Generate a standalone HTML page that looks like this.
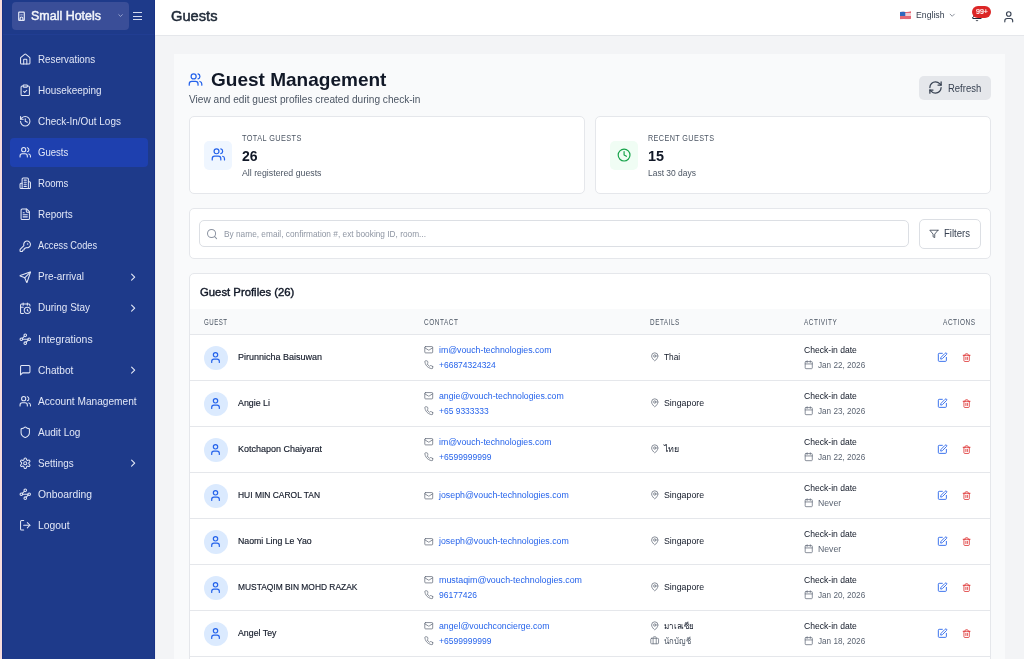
<!DOCTYPE html>
<html><head><meta charset="utf-8">
<style>
*{box-sizing:border-box;margin:0;padding:0}
html,body{width:1024px;height:659px;overflow:hidden}
body{-webkit-font-smoothing:antialiased;font-family:"Liberation Sans",sans-serif;background:#f3f4f6;position:relative;color:#111827}
.abs{position:absolute}
.t{white-space:nowrap}
svg{fill:none;stroke:currentColor;stroke-linecap:round;stroke-linejoin:round;overflow:visible}
</style></head>
<body><div id="root" style="position:absolute;left:0;top:0;width:1024px;height:659px;will-change:transform">
<div class="abs" style="left:0px;top:0px;width:2px;height:659px;background:#f8dddd;"></div>
<div class="abs" style="left:2px;top:0px;width:153px;height:659px;background:#1e3a8a;"></div>
<div class="abs" style="left:2px;top:0px;width:1px;height:659px;background:#183286;"></div>
<div class="abs" style="left:154px;top:0px;width:1px;height:659px;background:#183286;"></div>
<div class="abs" style="left:3px;top:34px;width:151px;height:1px;background:#213d92;"></div>
<div class="abs" style="left:12px;top:2px;width:117px;height:28px;background:#3a4e98;border-radius:4px"></div>
<svg class="abs" style="left:0;top:0;width:40px;height:30px;color:#e3e8f6" viewBox="0 0 40 30" stroke-width="1.15"><rect x="18.7" y="12.1" width="5.6" height="8.3" rx="0.6"/><path d="M20.1 20.3v-1.9a1.4 1.4 0 0 1 2.8 0v1.9"/><path d="M20.2 14.9h.01M21.5 14.9h.01M22.8 14.9h.01" stroke-width="0.9"/></svg>
<div class="abs t" style="left:31.3px;top:10px;font-size:12.3px;line-height:13.739px;color:#f3f5fb;font-weight:400;transform:scaleX(1.0140);transform-origin:0 0;-webkit-text-stroke:0.45px #f3f5fb">Small Hotels</div>
<svg class="abs" style="left:117.15px;top:12.26px;width:7.10px;height:7.10px;color:#c3cbe6" viewBox="0 0 24 24" stroke-width="2.2"><path d="m6 9 6 6 6-6"/></svg>
<div class="abs" style="left:133px;top:12.1px;width:9.2px;height:1.3px;background:#d3daf0;"></div>
<div class="abs" style="left:133px;top:15.6px;width:9.2px;height:1.3px;background:#d3daf0;"></div>
<div class="abs" style="left:133px;top:19.1px;width:9.2px;height:1.3px;background:#d3daf0;"></div>
<svg class="abs" style="left:18.8px;top:53.10px;width:12.5px;height:12.5px;color:#e3e8f6" viewBox="0 0 24 24" stroke-width="2"><path d="M15 21v-8a1 1 0 0 0-1-1h-4a1 1 0 0 0-1 1v8"/><path d="M3 10a2 2 0 0 1 .709-1.528l7-5.999a2 2 0 0 1 2.582 0l7 5.999A2 2 0 0 1 21 10v9a2 2 0 0 1-2 2H5a2 2 0 0 1-2-2z"/></svg>
<div class="abs t" style="left:38.4px;top:54px;font-size:10.6px;line-height:11.840px;color:#e2e7f7;font-weight:400;transform:scaleX(0.9235);transform-origin:0 0;">Reservations</div>
<svg class="abs" style="left:18.8px;top:84.17px;width:12.5px;height:12.5px;color:#e3e8f6" viewBox="0 0 24 24" stroke-width="2"><rect width="8" height="4" x="8" y="2" rx="1" ry="1"/><path d="M16 4h2a2 2 0 0 1 2 2v14a2 2 0 0 1-2 2H6a2 2 0 0 1-2-2V6a2 2 0 0 1 2-2h2"/><path d="m9 14 2 2 4-4"/></svg>
<div class="abs t" style="left:38.4px;top:85px;font-size:10.6px;line-height:11.840px;color:#e2e7f7;font-weight:400;transform:scaleX(0.9390);transform-origin:0 0;">Housekeeping</div>
<svg class="abs" style="left:18.8px;top:115.24px;width:12.5px;height:12.5px;color:#e3e8f6" viewBox="0 0 24 24" stroke-width="2"><path d="M3 12a9 9 0 1 0 9-9 9.75 9.75 0 0 0-6.74 2.74L3 8"/><path d="M3 3v5h5"/><path d="M12 7v5l4 2"/></svg>
<div class="abs t" style="left:38.4px;top:116px;font-size:10.6px;line-height:11.840px;color:#e2e7f7;font-weight:400;transform:scaleX(0.9385);transform-origin:0 0;">Check-In/Out Logs</div>
<div class="abs" style="left:10px;top:138px;width:138px;height:29px;background:#1e40af;border-radius:4px"></div>
<svg class="abs" style="left:18.8px;top:146.31px;width:12.5px;height:12.5px;color:#e3e8f6" viewBox="0 0 24 24" stroke-width="2"><path d="M16 21v-2a4 4 0 0 0-4-4H6a4 4 0 0 0-4 4v2"/><circle cx="9" cy="7" r="4"/><path d="M22 21v-2a4 4 0 0 0-3-3.87"/><path d="M16 3.13a4 4 0 0 1 0 7.75"/></svg>
<div class="abs t" style="left:38.4px;top:147px;font-size:10.6px;line-height:11.840px;color:#e2e7f7;font-weight:400;transform:scaleX(0.9028);transform-origin:0 0;">Guests</div>
<svg class="abs" style="left:18.8px;top:177.38px;width:12.5px;height:12.5px;color:#e3e8f6" viewBox="0 0 24 24" stroke-width="2"><path d="M6 22V4a2 2 0 0 1 2-2h8a2 2 0 0 1 2 2v18Z"/><path d="M6 12H4a2 2 0 0 0-2 2v6a2 2 0 0 0 2 2h2"/><path d="M18 9h2a2 2 0 0 1 2 2v9a2 2 0 0 1-2 2h-2"/><path d="M10 6h4"/><path d="M10 10h4"/><path d="M10 14h4"/><path d="M10 18h4"/></svg>
<div class="abs t" style="left:38.4px;top:178px;font-size:10.6px;line-height:11.840px;color:#e2e7f7;font-weight:400;transform:scaleX(0.9028);transform-origin:0 0;">Rooms</div>
<svg class="abs" style="left:18.8px;top:208.45px;width:12.5px;height:12.5px;color:#e3e8f6" viewBox="0 0 24 24" stroke-width="2"><path d="M15 2H6a2 2 0 0 0-2 2v16a2 2 0 0 0 2 2h12a2 2 0 0 0 2-2V7Z"/><path d="M14 2v4a2 2 0 0 0 2 2h4"/><path d="M10 9H8"/><path d="M16 13H8"/><path d="M16 17H8"/></svg>
<div class="abs t" style="left:38.4px;top:209px;font-size:10.6px;line-height:11.840px;color:#e2e7f7;font-weight:400;transform:scaleX(0.9328);transform-origin:0 0;">Reports</div>
<svg class="abs" style="left:18.8px;top:239.52px;width:12.5px;height:12.5px;color:#e3e8f6" viewBox="0 0 24 24" stroke-width="2"><path d="M2.586 17.414A2 2 0 0 0 2 18.828V21a1 1 0 0 0 1 1h3a1 1 0 0 0 1-1v-1a1 1 0 0 1 1-1h1a1 1 0 0 0 1-1v-1a1 1 0 0 1 1-1h.172a2 2 0 0 0 1.414-.586l.814-.814a6.5 6.5 0 1 0-4-4z"/><circle cx="16.5" cy="7.5" r=".5" fill="currentColor"/></svg>
<div class="abs t" style="left:38.4px;top:240px;font-size:10.6px;line-height:11.840px;color:#e2e7f7;font-weight:400;transform:scaleX(0.8727);transform-origin:0 0;">Access Codes</div>
<svg class="abs" style="left:18.8px;top:270.59px;width:12.5px;height:12.5px;color:#e3e8f6" viewBox="0 0 24 24" stroke-width="2"><path d="M14.536 21.686a.5.5 0 0 0 .937-.024l6.5-19a.496.496 0 0 0-.635-.635l-19 6.5a.5.5 0 0 0-.024.937l7.93 3.18a2 2 0 0 1 1.112 1.11z"/><path d="m21.854 2.147-10.94 10.939"/></svg>
<div class="abs t" style="left:38.4px;top:271px;font-size:10.6px;line-height:11.840px;color:#e2e7f7;font-weight:400;transform:scaleX(0.9394);transform-origin:0 0;">Pre-arrival</div>
<svg class="abs" style="left:126.85px;top:270.78px;width:12.29px;height:12.29px;color:#e3e8f6" viewBox="0 0 24 24" stroke-width="2.2"><path d="m9 18 6-6-6-6"/></svg>
<svg class="abs" style="left:18.8px;top:301.66px;width:12.5px;height:12.5px;color:#e3e8f6" viewBox="0 0 24 24" stroke-width="2"><path d="M21 7.5V6a2 2 0 0 0-2-2H5a2 2 0 0 0-2 2v14a2 2 0 0 0 2 2h3.5"/><path d="M16 2v4"/><path d="M8 2v4"/><path d="M3 10h5"/><path d="M17.5 17.5 16 16.3V14"/><circle cx="16" cy="16" r="6"/></svg>
<div class="abs t" style="left:38.4px;top:302px;font-size:10.6px;line-height:11.840px;color:#e2e7f7;font-weight:400;transform:scaleX(0.9411);transform-origin:0 0;">During Stay</div>
<svg class="abs" style="left:126.85px;top:301.85px;width:12.29px;height:12.29px;color:#e3e8f6" viewBox="0 0 24 24" stroke-width="2.2"><path d="m9 18 6-6-6-6"/></svg>
<svg class="abs" style="left:18.8px;top:332.73px;width:12.5px;height:12.5px;color:#e3e8f6" viewBox="0 0 24 24" stroke-width="2"><circle cx="12" cy="4.5" r="2.5"/><path d="m10.2 6.3-3.9 3.9"/><circle cx="4.5" cy="12" r="2.5"/><path d="M7 12h10"/><circle cx="19.5" cy="12" r="2.5"/><path d="m13.8 17.7 3.9-3.9"/><circle cx="12" cy="19.5" r="2.5"/></svg>
<div class="abs t" style="left:38.4px;top:334px;font-size:10.6px;line-height:11.840px;color:#e2e7f7;font-weight:400;transform:scaleX(0.9863);transform-origin:0 0;">Integrations</div>
<svg class="abs" style="left:18.8px;top:363.80px;width:12.5px;height:12.5px;color:#e3e8f6" viewBox="0 0 24 24" stroke-width="2"><path d="M21 15a2 2 0 0 1-2 2H7l-4 4V5a2 2 0 0 1 2-2h14a2 2 0 0 1 2 2z"/></svg>
<div class="abs t" style="left:38.4px;top:365px;font-size:10.6px;line-height:11.840px;color:#e2e7f7;font-weight:400;transform:scaleX(0.9539);transform-origin:0 0;">Chatbot</div>
<svg class="abs" style="left:126.85px;top:363.99px;width:12.29px;height:12.29px;color:#e3e8f6" viewBox="0 0 24 24" stroke-width="2.2"><path d="m9 18 6-6-6-6"/></svg>
<svg class="abs" style="left:18.8px;top:394.87px;width:12.5px;height:12.5px;color:#e3e8f6" viewBox="0 0 24 24" stroke-width="2"><path d="M16 21v-2a4 4 0 0 0-4-4H6a4 4 0 0 0-4 4v2"/><circle cx="9" cy="7" r="4"/><path d="M22 21v-2a4 4 0 0 0-3-3.87"/><path d="M16 3.13a4 4 0 0 1 0 7.75"/></svg>
<div class="abs t" style="left:38.4px;top:396px;font-size:10.6px;line-height:11.840px;color:#e2e7f7;font-weight:400;transform:scaleX(0.9567);transform-origin:0 0;">Account Management</div>
<svg class="abs" style="left:18.8px;top:425.94px;width:12.5px;height:12.5px;color:#e3e8f6" viewBox="0 0 24 24" stroke-width="2"><path d="M20 13c0 5-3.5 7.5-7.66 8.95a1 1 0 0 1-.67-.01C7.5 20.5 4 18 4 13V6a1 1 0 0 1 1-1c2 0 4.5-1.2 6.24-2.72a1.17 1.17 0 0 1 1.52 0C14.51 3.81 17 5 19 5a1 1 0 0 1 1 1z"/></svg>
<div class="abs t" style="left:38.4px;top:427px;font-size:10.6px;line-height:11.840px;color:#e2e7f7;font-weight:400;transform:scaleX(0.9472);transform-origin:0 0;">Audit Log</div>
<svg class="abs" style="left:18.8px;top:457.01px;width:12.5px;height:12.5px;color:#e3e8f6" viewBox="0 0 24 24" stroke-width="2"><path d="M12.22 2h-.44a2 2 0 0 0-2 2v.18a2 2 0 0 1-1 1.73l-.43.25a2 2 0 0 1-2 0l-.15-.08a2 2 0 0 0-2.73.73l-.22.38a2 2 0 0 0 .73 2.73l.15.1a2 2 0 0 1 1 1.72v.51a2 2 0 0 1-1 1.74l-.15.09a2 2 0 0 0-.73 2.73l.22.38a2 2 0 0 0 2.73.73l.15-.08a2 2 0 0 1 2 0l.43.25a2 2 0 0 1 1 1.73V20a2 2 0 0 0 2 2h.44a2 2 0 0 0 2-2v-.18a2 2 0 0 1 1-1.73l.43-.25a2 2 0 0 1 2 0l.15.08a2 2 0 0 0 2.73-.73l.22-.39a2 2 0 0 0-.73-2.73l-.15-.08a2 2 0 0 1-1-1.74v-.5a2 2 0 0 1 1-1.74l.15-.09a2 2 0 0 0 .73-2.73l-.22-.38a2 2 0 0 0-2.73-.73l-.15.08a2 2 0 0 1-2 0l-.43-.25a2 2 0 0 1-1-1.73V4a2 2 0 0 0-2-2z"/><circle cx="12" cy="12" r="3"/></svg>
<div class="abs t" style="left:38.4px;top:458px;font-size:10.6px;line-height:11.840px;color:#e2e7f7;font-weight:400;transform:scaleX(0.9300);transform-origin:0 0;">Settings</div>
<svg class="abs" style="left:126.85px;top:457.20px;width:12.29px;height:12.29px;color:#e3e8f6" viewBox="0 0 24 24" stroke-width="2.2"><path d="m9 18 6-6-6-6"/></svg>
<svg class="abs" style="left:18.8px;top:488.08px;width:12.5px;height:12.5px;color:#e3e8f6" viewBox="0 0 24 24" stroke-width="2"><circle cx="12" cy="4.5" r="2.5"/><path d="m10.2 6.3-3.9 3.9"/><circle cx="4.5" cy="12" r="2.5"/><path d="M7 12h10"/><circle cx="19.5" cy="12" r="2.5"/><path d="m13.8 17.7 3.9-3.9"/><circle cx="12" cy="19.5" r="2.5"/></svg>
<div class="abs t" style="left:38.4px;top:489px;font-size:10.6px;line-height:11.840px;color:#e2e7f7;font-weight:400;transform:scaleX(0.9752);transform-origin:0 0;">Onboarding</div>
<svg class="abs" style="left:18.8px;top:519.15px;width:12.5px;height:12.5px;color:#e3e8f6" viewBox="0 0 24 24" stroke-width="2"><path d="M9 21H5a2 2 0 0 1-2-2V5a2 2 0 0 1 2-2h4"/><path d="m16 17 5-5-5-5"/><path d="M21 12H9"/></svg>
<div class="abs t" style="left:38.4px;top:520px;font-size:10.6px;line-height:11.840px;color:#e2e7f7;font-weight:400;transform:scaleX(0.9751);transform-origin:0 0;">Logout</div>
<div class="abs" style="left:155px;top:0px;width:869px;height:35px;background:#fff;"></div>
<div class="abs" style="left:155px;top:35px;width:869px;height:1px;background:#e5e7eb;"></div>
<div class="abs" style="left:155px;top:36px;width:1px;height:623px;background:#eceef3;"></div>
<div class="abs t" style="left:170.5px;top:8px;font-size:14.5px;line-height:16.197px;color:#1f2937;font-weight:400;transform:scaleX(1.0122);transform-origin:0 0;-webkit-text-stroke:0.5px #1f2937">Guests</div>
<svg class="abs" style="left:899px;top:10px;width:14px;height:11px;overflow:visible" viewBox="899 10 14 11"><defs><linearGradient id="flagst" x1="0" y1="11.3" x2="0" y2="19.5" gradientUnits="userSpaceOnUse"><stop offset="0.0%" stop-color="#e46774"/><stop offset="7.9%" stop-color="#e46774"/><stop offset="7.9%" stop-color="#f5cdd2"/><stop offset="14.3%" stop-color="#f5cdd2"/><stop offset="14.3%" stop-color="#e46774"/><stop offset="22.1%" stop-color="#e46774"/><stop offset="22.1%" stop-color="#f5cdd2"/><stop offset="28.6%" stop-color="#f5cdd2"/><stop offset="28.6%" stop-color="#e46774"/><stop offset="36.4%" stop-color="#e46774"/><stop offset="36.4%" stop-color="#f5cdd2"/><stop offset="42.9%" stop-color="#f5cdd2"/><stop offset="42.9%" stop-color="#e46774"/><stop offset="50.7%" stop-color="#e46774"/><stop offset="50.7%" stop-color="#f5cdd2"/><stop offset="57.1%" stop-color="#f5cdd2"/><stop offset="57.1%" stop-color="#e46774"/><stop offset="65.0%" stop-color="#e46774"/><stop offset="65.0%" stop-color="#f5cdd2"/><stop offset="71.4%" stop-color="#f5cdd2"/><stop offset="71.4%" stop-color="#e46774"/><stop offset="79.3%" stop-color="#e46774"/><stop offset="79.3%" stop-color="#f5cdd2"/><stop offset="85.7%" stop-color="#f5cdd2"/><stop offset="85.7%" stop-color="#e46774"/><stop offset="93.6%" stop-color="#e46774"/><stop offset="93.6%" stop-color="#f5cdd2"/><stop offset="100.0%" stop-color="#f5cdd2"/></linearGradient></defs><path d="M900 12.1 Q903 11.7 905.5 12 Q908.5 12.3 911 11.3 L911 18.7 Q908.5 19.6 905.5 19.2 Q903 18.9 900 19.5 Z" style="fill:url(#flagst);stroke:none"/><path d="M900 12.1 Q903 11.7 905.3 12 L905.3 15.9 L900 16 Z" style="fill:#3068bd;stroke:none"/></svg>
<div class="abs t" style="left:915.9px;top:11px;font-size:8.2px;line-height:9.159px;color:#374151;font-weight:400;transform:scaleX(1.0611);transform-origin:0 0;">English</div>
<svg class="abs" style="left:948.27px;top:10.72px;width:8.45px;height:8.45px;color:#6b7280" viewBox="0 0 24 24" stroke-width="2.2"><path d="m6 9 6 6 6-6"/></svg>
<svg class="abs" style="left:971.2px;top:10.0px;width:12px;height:12px;color:#1f2937" viewBox="0 0 24 24" stroke-width="2"><path d="M10.268 21a2 2 0 0 0 3.464 0"/><path d="M3.262 15.326A1 1 0 0 0 4 17h16a1 1 0 0 0 .74-1.673C19.41 13.956 18 12.499 18 8A6 6 0 0 0 6 8c0 4.499-1.411 5.956-2.738 7.326"/></svg>
<div class="abs" style="left:972px;top:5.8px;width:19.1px;height:12.2px;background:#dc2626;border-radius:6.1px"></div>
<div class="abs t" style="left:975.8px;top:8px;font-size:7.7px;line-height:8.601px;color:#fff;font-weight:400;transform:scaleX(0.9198);transform-origin:0 0;-webkit-text-stroke:0.2px #fff">99+</div>
<svg class="abs" style="left:1001.75px;top:9.88px;width:13.50px;height:13.50px;color:#374151" viewBox="0 0 24 24" stroke-width="2"><path d="M19 21v-2a4 4 0 0 0-4-4H9a4 4 0 0 0-4 4v2"/><circle cx="12" cy="7" r="4"/></svg>
<div class="abs" style="left:174px;top:54px;width:831px;height:620px;background:#f9fafb;"></div>
<svg class="abs" style="left:188.47px;top:71.85px;width:15.05px;height:15.05px;color:#2563eb" viewBox="0 0 24 24" stroke-width="2"><path d="M16 21v-2a4 4 0 0 0-4-4H6a4 4 0 0 0-4 4v2"/><circle cx="9" cy="7" r="4"/><path d="M22 21v-2a4 4 0 0 0-3-3.87"/><path d="M16 3.13a4 4 0 0 1 0 7.75"/></svg>
<div class="abs t" style="left:211px;top:69px;font-size:19px;line-height:21.223px;color:#111827;font-weight:700;transform:scaleX(1.0008);transform-origin:0 0;">Guest Management</div>
<div class="abs t" style="left:189px;top:94px;font-size:10.1px;line-height:11.282px;color:#4b5563;font-weight:400;transform:scaleX(1.0022);transform-origin:0 0;">View and edit guest profiles created during check-in</div>
<div class="abs" style="left:919.3px;top:76px;width:71.5px;height:24px;background:#e5e7eb;border-radius:5px"></div>
<svg class="abs" style="left:928.05px;top:80.45px;width:15.00px;height:15.00px;color:#374151" viewBox="0 0 24 24" stroke-width="2"><path d="M3 12a9 9 0 0 1 9-9 9.75 9.75 0 0 1 6.74 2.74L21 8"/><path d="M21 3v5h-5"/><path d="M21 12a9 9 0 0 1-9 9 9.75 9.75 0 0 1-6.74-2.74L3 16"/><path d="M8 16H3v5"/></svg>
<div class="abs t" style="left:947.8px;top:82px;font-size:10.75px;line-height:12.008px;color:#374151;font-weight:400;transform:scaleX(0.8817);transform-origin:0 0;">Refresh</div>
<div class="abs" style="left:189px;top:116px;width:396px;height:78px;background:#fff;border:1px solid #e5e7eb;border-radius:5px"></div>
<div class="abs" style="left:204px;top:141px;width:28.3px;height:28.8px;background:#eff6ff;border-radius:5px"></div>
<svg class="abs" style="left:210.89px;top:147.27px;width:14.73px;height:14.73px;color:#2563eb" viewBox="0 0 24 24" stroke-width="2"><path d="M16 21v-2a4 4 0 0 0-4-4H6a4 4 0 0 0-4 4v2"/><circle cx="9" cy="7" r="4"/><path d="M22 21v-2a4 4 0 0 0-3-3.87"/><path d="M16 3.13a4 4 0 0 1 0 7.75"/></svg>
<div class="abs t" style="left:242.4px;top:133px;font-size:9.3px;line-height:10.388px;color:#4b5563;font-weight:400;transform:scaleX(0.7899);transform-origin:0 0;letter-spacing:0.5px;">TOTAL GUESTS</div>
<div class="abs t" style="left:242.4px;top:148px;font-size:15px;line-height:16.755px;color:#111827;font-weight:700;transform:scaleX(0.9348);transform-origin:0 0;">26</div>
<div class="abs t" style="left:242.4px;top:168px;font-size:9.15px;line-height:10.221px;color:#4b5563;font-weight:400;transform:scaleX(0.9615);transform-origin:0 0;">All registered guests</div>
<div class="abs" style="left:595px;top:116px;width:396px;height:78px;background:#fff;border:1px solid #e5e7eb;border-radius:5px"></div>
<div class="abs" style="left:610px;top:141px;width:28.3px;height:28.8px;background:#f0fdf4;border-radius:5px"></div>
<svg class="abs" style="left:616.91px;top:147.91px;width:14.18px;height:14.18px;color:#16a34a" viewBox="0 0 24 24" stroke-width="2"><circle cx="12" cy="12" r="10"/><path d="M12 6v6l4 2"/></svg>
<div class="abs t" style="left:648.2px;top:133px;font-size:9.3px;line-height:10.388px;color:#4b5563;font-weight:400;transform:scaleX(0.7777);transform-origin:0 0;letter-spacing:0.5px;">RECENT GUESTS</div>
<div class="abs t" style="left:648.2px;top:148px;font-size:15px;line-height:16.755px;color:#111827;font-weight:700;transform:scaleX(0.9588);transform-origin:0 0;">15</div>
<div class="abs t" style="left:648.2px;top:168px;font-size:9.15px;line-height:10.221px;color:#4b5563;font-weight:400;transform:scaleX(0.9275);transform-origin:0 0;">Last 30 days</div>
<div class="abs" style="left:189px;top:208px;width:802px;height:51px;background:#fff;border:1px solid #e5e7eb;border-radius:5px"></div>
<div class="abs" style="left:199px;top:220px;width:710px;height:27px;background:#fff;border:1px solid #dcdfe4;border-radius:5px"></div>
<svg class="abs" style="left:205.99px;top:227.69px;width:12.12px;height:12.12px;color:#8b93a1" viewBox="0 0 24 24" stroke-width="2"><circle cx="11" cy="11" r="8"/><path d="m21 21-4.3-4.3"/></svg>
<div class="abs t" style="left:224px;top:230px;font-size:8.4px;line-height:9.383px;color:#8f96a3;font-weight:400;transform:scaleX(0.9907);transform-origin:0 0;">By name, email, confirmation #, ext booking ID, room...</div>
<div class="abs" style="left:919.3px;top:219.1px;width:61.3px;height:29.6px;background:#fff;border:1px solid #dcdfe4;border-radius:5px"></div>
<svg class="abs" style="left:928.59px;top:228.68px;width:9.82px;height:9.82px;color:#374151" viewBox="0 0 24 24" stroke-width="2"><path d="M22 3H2l8 9.46V19l4 2v-8.54L22 3z"/></svg>
<div class="abs t" style="left:943.9px;top:227px;font-size:10.9px;line-height:12.175px;color:#374151;font-weight:400;transform:scaleX(0.8801);transform-origin:0 0;">Filters</div>
<div class="abs" style="left:189px;top:273px;width:802px;height:420px;background:#fff;border:1px solid #e5e7eb;border-radius:5px"></div>
<div class="abs t" style="left:199.6px;top:286px;font-size:11.5px;line-height:12.845px;color:#111827;font-weight:400;transform:scaleX(0.9846);transform-origin:0 0;-webkit-text-stroke:0.4px #111827">Guest Profiles (26)</div>
<div class="abs" style="left:190px;top:309px;width:800px;height:25px;background:#f9fafb;"></div>
<div class="abs" style="left:190px;top:334px;width:800px;height:1px;background:#e5e7eb;"></div>
<div class="abs t" style="left:203.9px;top:318px;font-size:8.4px;line-height:9.383px;color:#4b5563;font-weight:400;transform:scaleX(0.7293);transform-origin:0 0;letter-spacing:0.7px;">GUEST</div>
<div class="abs t" style="left:424px;top:318px;font-size:8.4px;line-height:9.383px;color:#4b5563;font-weight:400;transform:scaleX(0.7684);transform-origin:0 0;letter-spacing:0.7px;">CONTACT</div>
<div class="abs t" style="left:650.2px;top:318px;font-size:8.4px;line-height:9.383px;color:#4b5563;font-weight:400;transform:scaleX(0.7604);transform-origin:0 0;letter-spacing:0.7px;">DETAILS</div>
<div class="abs t" style="left:804px;top:318px;font-size:8.4px;line-height:9.383px;color:#4b5563;font-weight:400;transform:scaleX(0.7668);transform-origin:0 0;letter-spacing:0.7px;">ACTIVITY</div>
<div class="abs t" style="left:943.1px;top:318px;font-size:8.4px;line-height:9.383px;color:#4b5563;font-weight:400;transform:scaleX(0.7760);transform-origin:0 0;letter-spacing:0.7px;">ACTIONS</div>
<div class="abs" style="left:190px;top:380px;width:800px;height:1px;background:#e5e7eb;"></div>
<div class="abs" style="left:204px;top:345.5px;width:24px;height:24px;background:#dbeafe;border-radius:50%"></div>
<svg class="abs" style="left:209.28px;top:351.27px;width:13.04px;height:13.04px;color:#2563eb" viewBox="0 0 24 24" stroke-width="2.2"><path d="M19 21v-2a4 4 0 0 0-4-4H9a4 4 0 0 0-4 4v2"/><circle cx="12" cy="7" r="4"/></svg>
<div class="abs t" style="left:237.7px;top:352px;font-size:9.2px;line-height:10.276px;color:#111827;font-weight:400;transform:scaleX(0.9789);transform-origin:0 0;-webkit-text-stroke:0.15px #111827">Pirunnicha Baisuwan</div>
<svg class="abs" style="left:423.70px;top:345.41px;width:9.49px;height:9.49px;color:#6b7280" viewBox="0 0 24 24" stroke-width="2"><rect width="20" height="16" x="2" y="4" rx="2"/><path d="m22 7-8.97 5.7a1.94 1.94 0 0 1-2.06 0L2 7"/></svg>
<div class="abs t" style="left:438.7px;top:346px;font-size:8.9px;line-height:9.941px;color:#2563eb;font-weight:400;transform:scaleX(0.9860);transform-origin:0 0;">im@vouch-technologies.com</div>
<svg class="abs" style="left:423.70px;top:359.60px;width:9.49px;height:9.49px;color:#6b7280" viewBox="0 0 24 24" stroke-width="2"><path d="M22 16.92v3a2 2 0 0 1-2.18 2 19.79 19.79 0 0 1-8.63-3.07 19.5 19.5 0 0 1-6-6 19.79 19.79 0 0 1-3.07-8.67A2 2 0 0 1 4.11 2h3a2 2 0 0 1 2 1.72 12.84 12.84 0 0 0 .7 2.81 2 2 0 0 1-.45 2.11L8.09 9.910a16 16 0 0 0 6 6l1.27-1.27a2 2 0 0 1 2.11-.45 12.84 12.84 0 0 0 2.81.7A2 2 0 0 1 22 16.92z"/></svg>
<div class="abs t" style="left:438.7px;top:361px;font-size:8.9px;line-height:9.941px;color:#2563eb;font-weight:400;transform:scaleX(0.9549);transform-origin:0 0;">+66874324324</div>
<svg class="abs" style="left:649.70px;top:352.30px;width:9.60px;height:9.60px;color:#6b7280" viewBox="0 0 24 24" stroke-width="2"><path d="M20 10c0 4.993-5.539 10.193-7.399 11.799a1 1 0 0 1-1.202 0C9.539 20.193 4 14.993 4 10a8 8 0 0 1 16 0"/><circle cx="12" cy="10" r="3"/></svg>
<div class="abs t" style="left:664.1px;top:353px;font-size:8.9px;line-height:9.941px;color:#111827;font-weight:400;transform:scaleX(0.9383);transform-origin:0 0;">Thai</div>
<div class="abs t" style="left:804.2px;top:346px;font-size:8.9px;line-height:9.941px;color:#111827;font-weight:400;transform:scaleX(0.9659);transform-origin:0 0;">Check-in date</div>
<svg class="abs" style="left:804.11px;top:360.00px;width:9.48px;height:9.48px;color:#6b7280" viewBox="0 0 24 24" stroke-width="2"><path d="M8 2v4"/><path d="M16 2v4"/><rect width="18" height="18" x="3" y="4" rx="2"/><path d="M3 10h18"/></svg>
<div class="abs t" style="left:818.1px;top:361px;font-size:8.9px;line-height:9.941px;color:#5b6472;font-weight:400;transform:scaleX(0.9196);transform-origin:0 0;">Jan 22, 2026</div>
<svg class="abs" style="left:937.41px;top:352.49px;width:10.71px;height:10.71px;color:#2563eb" viewBox="0 0 24 24" stroke-width="2"><path d="M12 3H5a2 2 0 0 0-2 2v14a2 2 0 0 0 2 2h14a2 2 0 0 0 2-2v-7"/><path d="M18.375 2.625a1 1 0 0 1 3 3l-9.013 9.014a2 2 0 0 1-.853.505l-2.873.84a.5.5 0 0 1-.62-.62l.84-2.873a2 2 0 0 1 .506-.852z"/></svg>
<svg class="abs" style="left:961.93px;top:352.92px;width:9.24px;height:9.24px;color:#dc2626" viewBox="0 0 24 24" stroke-width="2"><path d="M3 6h18"/><path d="M19 6v14c0 1-1 2-2 2H7c-1 0-2-1-2-2V6"/><path d="M8 6V4c0-1 1-2 2-2h4c1 0 2 1 2 2v2"/><path d="M10 11v6"/><path d="M14 11v6"/></svg>
<div class="abs" style="left:190px;top:426px;width:800px;height:1px;background:#e5e7eb;"></div>
<div class="abs" style="left:204px;top:391.5px;width:24px;height:24px;background:#dbeafe;border-radius:50%"></div>
<svg class="abs" style="left:209.28px;top:397.27px;width:13.04px;height:13.04px;color:#2563eb" viewBox="0 0 24 24" stroke-width="2.2"><path d="M19 21v-2a4 4 0 0 0-4-4H9a4 4 0 0 0-4 4v2"/><circle cx="12" cy="7" r="4"/></svg>
<div class="abs t" style="left:237.7px;top:398px;font-size:9.2px;line-height:10.276px;color:#111827;font-weight:400;transform:scaleX(0.9638);transform-origin:0 0;-webkit-text-stroke:0.15px #111827">Angie Li</div>
<svg class="abs" style="left:423.70px;top:391.41px;width:9.49px;height:9.49px;color:#6b7280" viewBox="0 0 24 24" stroke-width="2"><rect width="20" height="16" x="2" y="4" rx="2"/><path d="m22 7-8.97 5.7a1.94 1.94 0 0 1-2.06 0L2 7"/></svg>
<div class="abs t" style="left:438.7px;top:392px;font-size:8.9px;line-height:9.941px;color:#2563eb;font-weight:400;transform:scaleX(0.9870);transform-origin:0 0;">angie@vouch-technologies.com</div>
<svg class="abs" style="left:423.70px;top:405.60px;width:9.49px;height:9.49px;color:#6b7280" viewBox="0 0 24 24" stroke-width="2"><path d="M22 16.92v3a2 2 0 0 1-2.18 2 19.79 19.79 0 0 1-8.63-3.07 19.5 19.5 0 0 1-6-6 19.79 19.79 0 0 1-3.07-8.67A2 2 0 0 1 4.11 2h3a2 2 0 0 1 2 1.72 12.84 12.84 0 0 0 .7 2.81 2 2 0 0 1-.45 2.11L8.09 9.910a16 16 0 0 0 6 6l1.27-1.27a2 2 0 0 1 2.11-.45 12.84 12.84 0 0 0 2.81.7A2 2 0 0 1 22 16.92z"/></svg>
<div class="abs t" style="left:438.7px;top:407px;font-size:8.9px;line-height:9.941px;color:#2563eb;font-weight:400;transform:scaleX(0.9524);transform-origin:0 0;">+65 9333333</div>
<svg class="abs" style="left:649.70px;top:398.30px;width:9.60px;height:9.60px;color:#6b7280" viewBox="0 0 24 24" stroke-width="2"><path d="M20 10c0 4.993-5.539 10.193-7.399 11.799a1 1 0 0 1-1.202 0C9.539 20.193 4 14.993 4 10a8 8 0 0 1 16 0"/><circle cx="12" cy="10" r="3"/></svg>
<div class="abs t" style="left:664.1px;top:399px;font-size:8.9px;line-height:9.941px;color:#111827;font-weight:400;transform:scaleX(0.9909);transform-origin:0 0;">Singapore</div>
<div class="abs t" style="left:804.2px;top:392px;font-size:8.9px;line-height:9.941px;color:#111827;font-weight:400;transform:scaleX(0.9659);transform-origin:0 0;">Check-in date</div>
<svg class="abs" style="left:804.11px;top:406.00px;width:9.48px;height:9.48px;color:#6b7280" viewBox="0 0 24 24" stroke-width="2"><path d="M8 2v4"/><path d="M16 2v4"/><rect width="18" height="18" x="3" y="4" rx="2"/><path d="M3 10h18"/></svg>
<div class="abs t" style="left:818.1px;top:407px;font-size:8.9px;line-height:9.941px;color:#5b6472;font-weight:400;transform:scaleX(0.9196);transform-origin:0 0;">Jan 23, 2026</div>
<svg class="abs" style="left:937.41px;top:398.49px;width:10.71px;height:10.71px;color:#2563eb" viewBox="0 0 24 24" stroke-width="2"><path d="M12 3H5a2 2 0 0 0-2 2v14a2 2 0 0 0 2 2h14a2 2 0 0 0 2-2v-7"/><path d="M18.375 2.625a1 1 0 0 1 3 3l-9.013 9.014a2 2 0 0 1-.853.505l-2.873.84a.5.5 0 0 1-.62-.62l.84-2.873a2 2 0 0 1 .506-.852z"/></svg>
<svg class="abs" style="left:961.93px;top:398.92px;width:9.24px;height:9.24px;color:#dc2626" viewBox="0 0 24 24" stroke-width="2"><path d="M3 6h18"/><path d="M19 6v14c0 1-1 2-2 2H7c-1 0-2-1-2-2V6"/><path d="M8 6V4c0-1 1-2 2-2h4c1 0 2 1 2 2v2"/><path d="M10 11v6"/><path d="M14 11v6"/></svg>
<div class="abs" style="left:190px;top:472px;width:800px;height:1px;background:#e5e7eb;"></div>
<div class="abs" style="left:204px;top:437.5px;width:24px;height:24px;background:#dbeafe;border-radius:50%"></div>
<svg class="abs" style="left:209.28px;top:443.27px;width:13.04px;height:13.04px;color:#2563eb" viewBox="0 0 24 24" stroke-width="2.2"><path d="M19 21v-2a4 4 0 0 0-4-4H9a4 4 0 0 0-4 4v2"/><circle cx="12" cy="7" r="4"/></svg>
<div class="abs t" style="left:237.7px;top:444px;font-size:9.2px;line-height:10.276px;color:#111827;font-weight:400;transform:scaleX(0.9789);transform-origin:0 0;-webkit-text-stroke:0.15px #111827">Kotchapon Chaiyarat</div>
<svg class="abs" style="left:423.70px;top:437.41px;width:9.49px;height:9.49px;color:#6b7280" viewBox="0 0 24 24" stroke-width="2"><rect width="20" height="16" x="2" y="4" rx="2"/><path d="m22 7-8.97 5.7a1.94 1.94 0 0 1-2.06 0L2 7"/></svg>
<div class="abs t" style="left:438.7px;top:438px;font-size:8.9px;line-height:9.941px;color:#2563eb;font-weight:400;transform:scaleX(0.9860);transform-origin:0 0;">im@vouch-technologies.com</div>
<svg class="abs" style="left:423.70px;top:451.60px;width:9.49px;height:9.49px;color:#6b7280" viewBox="0 0 24 24" stroke-width="2"><path d="M22 16.92v3a2 2 0 0 1-2.18 2 19.79 19.79 0 0 1-8.63-3.07 19.5 19.5 0 0 1-6-6 19.79 19.79 0 0 1-3.07-8.67A2 2 0 0 1 4.11 2h3a2 2 0 0 1 2 1.72 12.84 12.84 0 0 0 .7 2.81 2 2 0 0 1-.45 2.11L8.09 9.910a16 16 0 0 0 6 6l1.27-1.27a2 2 0 0 1 2.11-.45 12.84 12.84 0 0 0 2.81.7A2 2 0 0 1 22 16.92z"/></svg>
<div class="abs t" style="left:438.7px;top:453px;font-size:8.9px;line-height:9.941px;color:#2563eb;font-weight:400;transform:scaleX(0.9606);transform-origin:0 0;">+6599999999</div>
<svg class="abs" style="left:649.70px;top:444.30px;width:9.60px;height:9.60px;color:#6b7280" viewBox="0 0 24 24" stroke-width="2"><path d="M20 10c0 4.993-5.539 10.193-7.399 11.799a1 1 0 0 1-1.202 0C9.539 20.193 4 14.993 4 10a8 8 0 0 1 16 0"/><circle cx="12" cy="10" r="3"/></svg>
<div class="abs t" style="left:664.1px;top:445px;font-size:8.9px;line-height:9.941px;color:#111827;font-weight:400;">ไทย</div>
<div class="abs t" style="left:804.2px;top:438px;font-size:8.9px;line-height:9.941px;color:#111827;font-weight:400;transform:scaleX(0.9659);transform-origin:0 0;">Check-in date</div>
<svg class="abs" style="left:804.11px;top:452.00px;width:9.48px;height:9.48px;color:#6b7280" viewBox="0 0 24 24" stroke-width="2"><path d="M8 2v4"/><path d="M16 2v4"/><rect width="18" height="18" x="3" y="4" rx="2"/><path d="M3 10h18"/></svg>
<div class="abs t" style="left:818.1px;top:453px;font-size:8.9px;line-height:9.941px;color:#5b6472;font-weight:400;transform:scaleX(0.9196);transform-origin:0 0;">Jan 22, 2026</div>
<svg class="abs" style="left:937.41px;top:444.49px;width:10.71px;height:10.71px;color:#2563eb" viewBox="0 0 24 24" stroke-width="2"><path d="M12 3H5a2 2 0 0 0-2 2v14a2 2 0 0 0 2 2h14a2 2 0 0 0 2-2v-7"/><path d="M18.375 2.625a1 1 0 0 1 3 3l-9.013 9.014a2 2 0 0 1-.853.505l-2.873.84a.5.5 0 0 1-.62-.62l.84-2.873a2 2 0 0 1 .506-.852z"/></svg>
<svg class="abs" style="left:961.93px;top:444.92px;width:9.24px;height:9.24px;color:#dc2626" viewBox="0 0 24 24" stroke-width="2"><path d="M3 6h18"/><path d="M19 6v14c0 1-1 2-2 2H7c-1 0-2-1-2-2V6"/><path d="M8 6V4c0-1 1-2 2-2h4c1 0 2 1 2 2v2"/><path d="M10 11v6"/><path d="M14 11v6"/></svg>
<div class="abs" style="left:190px;top:518px;width:800px;height:1px;background:#e5e7eb;"></div>
<div class="abs" style="left:204px;top:483.5px;width:24px;height:24px;background:#dbeafe;border-radius:50%"></div>
<svg class="abs" style="left:209.28px;top:489.27px;width:13.04px;height:13.04px;color:#2563eb" viewBox="0 0 24 24" stroke-width="2.2"><path d="M19 21v-2a4 4 0 0 0-4-4H9a4 4 0 0 0-4 4v2"/><circle cx="12" cy="7" r="4"/></svg>
<div class="abs t" style="left:237.7px;top:490px;font-size:9.2px;line-height:10.276px;color:#111827;font-weight:400;transform:scaleX(0.9196);transform-origin:0 0;-webkit-text-stroke:0.15px #111827">HUI MIN CAROL TAN</div>
<svg class="abs" style="left:423.70px;top:490.81px;width:9.49px;height:9.49px;color:#6b7280" viewBox="0 0 24 24" stroke-width="2"><rect width="20" height="16" x="2" y="4" rx="2"/><path d="m22 7-8.97 5.7a1.94 1.94 0 0 1-2.06 0L2 7"/></svg>
<div class="abs t" style="left:438.7px;top:491px;font-size:8.9px;line-height:9.941px;color:#2563eb;font-weight:400;transform:scaleX(0.9918);transform-origin:0 0;">joseph@vouch-technologies.com</div>
<svg class="abs" style="left:649.70px;top:490.30px;width:9.60px;height:9.60px;color:#6b7280" viewBox="0 0 24 24" stroke-width="2"><path d="M20 10c0 4.993-5.539 10.193-7.399 11.799a1 1 0 0 1-1.202 0C9.539 20.193 4 14.993 4 10a8 8 0 0 1 16 0"/><circle cx="12" cy="10" r="3"/></svg>
<div class="abs t" style="left:664.1px;top:491px;font-size:8.9px;line-height:9.941px;color:#111827;font-weight:400;transform:scaleX(0.9909);transform-origin:0 0;">Singapore</div>
<div class="abs t" style="left:804.2px;top:484px;font-size:8.9px;line-height:9.941px;color:#111827;font-weight:400;transform:scaleX(0.9659);transform-origin:0 0;">Check-in date</div>
<svg class="abs" style="left:804.11px;top:498.00px;width:9.48px;height:9.48px;color:#6b7280" viewBox="0 0 24 24" stroke-width="2"><path d="M8 2v4"/><path d="M16 2v4"/><rect width="18" height="18" x="3" y="4" rx="2"/><path d="M3 10h18"/></svg>
<div class="abs t" style="left:818.1px;top:499px;font-size:8.9px;line-height:9.941px;color:#5b6472;font-weight:400;transform:scaleX(0.9794);transform-origin:0 0;">Never</div>
<svg class="abs" style="left:937.41px;top:490.49px;width:10.71px;height:10.71px;color:#2563eb" viewBox="0 0 24 24" stroke-width="2"><path d="M12 3H5a2 2 0 0 0-2 2v14a2 2 0 0 0 2 2h14a2 2 0 0 0 2-2v-7"/><path d="M18.375 2.625a1 1 0 0 1 3 3l-9.013 9.014a2 2 0 0 1-.853.505l-2.873.84a.5.5 0 0 1-.62-.62l.84-2.873a2 2 0 0 1 .506-.852z"/></svg>
<svg class="abs" style="left:961.93px;top:490.92px;width:9.24px;height:9.24px;color:#dc2626" viewBox="0 0 24 24" stroke-width="2"><path d="M3 6h18"/><path d="M19 6v14c0 1-1 2-2 2H7c-1 0-2-1-2-2V6"/><path d="M8 6V4c0-1 1-2 2-2h4c1 0 2 1 2 2v2"/><path d="M10 11v6"/><path d="M14 11v6"/></svg>
<div class="abs" style="left:190px;top:564px;width:800px;height:1px;background:#e5e7eb;"></div>
<div class="abs" style="left:204px;top:529.5px;width:24px;height:24px;background:#dbeafe;border-radius:50%"></div>
<svg class="abs" style="left:209.28px;top:535.27px;width:13.04px;height:13.04px;color:#2563eb" viewBox="0 0 24 24" stroke-width="2.2"><path d="M19 21v-2a4 4 0 0 0-4-4H9a4 4 0 0 0-4 4v2"/><circle cx="12" cy="7" r="4"/></svg>
<div class="abs t" style="left:237.7px;top:536px;font-size:9.2px;line-height:10.276px;color:#111827;font-weight:400;transform:scaleX(0.9535);transform-origin:0 0;-webkit-text-stroke:0.15px #111827">Naomi Ling Le Yao</div>
<svg class="abs" style="left:423.70px;top:536.81px;width:9.49px;height:9.49px;color:#6b7280" viewBox="0 0 24 24" stroke-width="2"><rect width="20" height="16" x="2" y="4" rx="2"/><path d="m22 7-8.97 5.7a1.94 1.94 0 0 1-2.06 0L2 7"/></svg>
<div class="abs t" style="left:438.7px;top:537px;font-size:8.9px;line-height:9.941px;color:#2563eb;font-weight:400;transform:scaleX(0.9918);transform-origin:0 0;">joseph@vouch-technologies.com</div>
<svg class="abs" style="left:649.70px;top:536.30px;width:9.60px;height:9.60px;color:#6b7280" viewBox="0 0 24 24" stroke-width="2"><path d="M20 10c0 4.993-5.539 10.193-7.399 11.799a1 1 0 0 1-1.202 0C9.539 20.193 4 14.993 4 10a8 8 0 0 1 16 0"/><circle cx="12" cy="10" r="3"/></svg>
<div class="abs t" style="left:664.1px;top:537px;font-size:8.9px;line-height:9.941px;color:#111827;font-weight:400;transform:scaleX(0.9909);transform-origin:0 0;">Singapore</div>
<div class="abs t" style="left:804.2px;top:530px;font-size:8.9px;line-height:9.941px;color:#111827;font-weight:400;transform:scaleX(0.9659);transform-origin:0 0;">Check-in date</div>
<svg class="abs" style="left:804.11px;top:544.00px;width:9.48px;height:9.48px;color:#6b7280" viewBox="0 0 24 24" stroke-width="2"><path d="M8 2v4"/><path d="M16 2v4"/><rect width="18" height="18" x="3" y="4" rx="2"/><path d="M3 10h18"/></svg>
<div class="abs t" style="left:818.1px;top:545px;font-size:8.9px;line-height:9.941px;color:#5b6472;font-weight:400;transform:scaleX(0.9794);transform-origin:0 0;">Never</div>
<svg class="abs" style="left:937.41px;top:536.49px;width:10.71px;height:10.71px;color:#2563eb" viewBox="0 0 24 24" stroke-width="2"><path d="M12 3H5a2 2 0 0 0-2 2v14a2 2 0 0 0 2 2h14a2 2 0 0 0 2-2v-7"/><path d="M18.375 2.625a1 1 0 0 1 3 3l-9.013 9.014a2 2 0 0 1-.853.505l-2.873.84a.5.5 0 0 1-.62-.62l.84-2.873a2 2 0 0 1 .506-.852z"/></svg>
<svg class="abs" style="left:961.93px;top:536.91px;width:9.24px;height:9.24px;color:#dc2626" viewBox="0 0 24 24" stroke-width="2"><path d="M3 6h18"/><path d="M19 6v14c0 1-1 2-2 2H7c-1 0-2-1-2-2V6"/><path d="M8 6V4c0-1 1-2 2-2h4c1 0 2 1 2 2v2"/><path d="M10 11v6"/><path d="M14 11v6"/></svg>
<div class="abs" style="left:190px;top:610px;width:800px;height:1px;background:#e5e7eb;"></div>
<div class="abs" style="left:204px;top:575.5px;width:24px;height:24px;background:#dbeafe;border-radius:50%"></div>
<svg class="abs" style="left:209.28px;top:581.27px;width:13.04px;height:13.04px;color:#2563eb" viewBox="0 0 24 24" stroke-width="2.2"><path d="M19 21v-2a4 4 0 0 0-4-4H9a4 4 0 0 0-4 4v2"/><circle cx="12" cy="7" r="4"/></svg>
<div class="abs t" style="left:237.7px;top:582px;font-size:9.2px;line-height:10.276px;color:#111827;font-weight:400;transform:scaleX(0.9149);transform-origin:0 0;-webkit-text-stroke:0.15px #111827">MUSTAQIM BIN MOHD RAZAK</div>
<svg class="abs" style="left:423.70px;top:575.41px;width:9.49px;height:9.49px;color:#6b7280" viewBox="0 0 24 24" stroke-width="2"><rect width="20" height="16" x="2" y="4" rx="2"/><path d="m22 7-8.97 5.7a1.94 1.94 0 0 1-2.06 0L2 7"/></svg>
<div class="abs t" style="left:438.7px;top:576px;font-size:8.9px;line-height:9.941px;color:#2563eb;font-weight:400;transform:scaleX(0.9987);transform-origin:0 0;">mustaqim@vouch-technologies.com</div>
<svg class="abs" style="left:423.70px;top:589.60px;width:9.49px;height:9.49px;color:#6b7280" viewBox="0 0 24 24" stroke-width="2"><path d="M22 16.92v3a2 2 0 0 1-2.18 2 19.79 19.79 0 0 1-8.63-3.07 19.5 19.5 0 0 1-6-6 19.79 19.79 0 0 1-3.07-8.67A2 2 0 0 1 4.11 2h3a2 2 0 0 1 2 1.72 12.84 12.84 0 0 0 .7 2.81 2 2 0 0 1-.45 2.11L8.09 9.910a16 16 0 0 0 6 6l1.27-1.27a2 2 0 0 1 2.11-.45 12.84 12.84 0 0 0 2.81.7A2 2 0 0 1 22 16.92z"/></svg>
<div class="abs t" style="left:438.7px;top:591px;font-size:8.9px;line-height:9.941px;color:#2563eb;font-weight:400;transform:scaleX(0.9620);transform-origin:0 0;">96177426</div>
<svg class="abs" style="left:649.70px;top:582.30px;width:9.60px;height:9.60px;color:#6b7280" viewBox="0 0 24 24" stroke-width="2"><path d="M20 10c0 4.993-5.539 10.193-7.399 11.799a1 1 0 0 1-1.202 0C9.539 20.193 4 14.993 4 10a8 8 0 0 1 16 0"/><circle cx="12" cy="10" r="3"/></svg>
<div class="abs t" style="left:664.1px;top:583px;font-size:8.9px;line-height:9.941px;color:#111827;font-weight:400;transform:scaleX(0.9909);transform-origin:0 0;">Singapore</div>
<div class="abs t" style="left:804.2px;top:576px;font-size:8.9px;line-height:9.941px;color:#111827;font-weight:400;transform:scaleX(0.9659);transform-origin:0 0;">Check-in date</div>
<svg class="abs" style="left:804.11px;top:590.00px;width:9.48px;height:9.48px;color:#6b7280" viewBox="0 0 24 24" stroke-width="2"><path d="M8 2v4"/><path d="M16 2v4"/><rect width="18" height="18" x="3" y="4" rx="2"/><path d="M3 10h18"/></svg>
<div class="abs t" style="left:818.1px;top:591px;font-size:8.9px;line-height:9.941px;color:#5b6472;font-weight:400;transform:scaleX(0.9196);transform-origin:0 0;">Jan 20, 2026</div>
<svg class="abs" style="left:937.41px;top:582.49px;width:10.71px;height:10.71px;color:#2563eb" viewBox="0 0 24 24" stroke-width="2"><path d="M12 3H5a2 2 0 0 0-2 2v14a2 2 0 0 0 2 2h14a2 2 0 0 0 2-2v-7"/><path d="M18.375 2.625a1 1 0 0 1 3 3l-9.013 9.014a2 2 0 0 1-.853.505l-2.873.84a.5.5 0 0 1-.62-.62l.84-2.873a2 2 0 0 1 .506-.852z"/></svg>
<svg class="abs" style="left:961.93px;top:582.91px;width:9.24px;height:9.24px;color:#dc2626" viewBox="0 0 24 24" stroke-width="2"><path d="M3 6h18"/><path d="M19 6v14c0 1-1 2-2 2H7c-1 0-2-1-2-2V6"/><path d="M8 6V4c0-1 1-2 2-2h4c1 0 2 1 2 2v2"/><path d="M10 11v6"/><path d="M14 11v6"/></svg>
<div class="abs" style="left:190px;top:656px;width:800px;height:1px;background:#e5e7eb;"></div>
<div class="abs" style="left:204px;top:621.5px;width:24px;height:24px;background:#dbeafe;border-radius:50%"></div>
<svg class="abs" style="left:209.28px;top:627.27px;width:13.04px;height:13.04px;color:#2563eb" viewBox="0 0 24 24" stroke-width="2.2"><path d="M19 21v-2a4 4 0 0 0-4-4H9a4 4 0 0 0-4 4v2"/><circle cx="12" cy="7" r="4"/></svg>
<div class="abs t" style="left:237.7px;top:628px;font-size:9.2px;line-height:10.276px;color:#111827;font-weight:400;transform:scaleX(0.9580);transform-origin:0 0;-webkit-text-stroke:0.15px #111827">Angel Tey</div>
<svg class="abs" style="left:423.70px;top:621.41px;width:9.49px;height:9.49px;color:#6b7280" viewBox="0 0 24 24" stroke-width="2"><rect width="20" height="16" x="2" y="4" rx="2"/><path d="m22 7-8.97 5.7a1.94 1.94 0 0 1-2.06 0L2 7"/></svg>
<div class="abs t" style="left:438.7px;top:622px;font-size:8.9px;line-height:9.941px;color:#2563eb;font-weight:400;transform:scaleX(0.9855);transform-origin:0 0;">angel@vouchconcierge.com</div>
<svg class="abs" style="left:423.70px;top:635.60px;width:9.49px;height:9.49px;color:#6b7280" viewBox="0 0 24 24" stroke-width="2"><path d="M22 16.92v3a2 2 0 0 1-2.18 2 19.79 19.79 0 0 1-8.63-3.07 19.5 19.5 0 0 1-6-6 19.79 19.79 0 0 1-3.07-8.67A2 2 0 0 1 4.11 2h3a2 2 0 0 1 2 1.72 12.84 12.84 0 0 0 .7 2.81 2 2 0 0 1-.45 2.11L8.09 9.910a16 16 0 0 0 6 6l1.27-1.27a2 2 0 0 1 2.11-.45 12.84 12.84 0 0 0 2.81.7A2 2 0 0 1 22 16.92z"/></svg>
<div class="abs t" style="left:438.7px;top:637px;font-size:8.9px;line-height:9.941px;color:#2563eb;font-weight:400;transform:scaleX(0.9606);transform-origin:0 0;">+6599999999</div>
<svg class="abs" style="left:649.70px;top:621.30px;width:9.60px;height:9.60px;color:#6b7280" viewBox="0 0 24 24" stroke-width="2"><path d="M20 10c0 4.993-5.539 10.193-7.399 11.799a1 1 0 0 1-1.202 0C9.539 20.193 4 14.993 4 10a8 8 0 0 1 16 0"/><circle cx="12" cy="10" r="3"/></svg>
<div class="abs t" style="left:664.2px;top:622px;font-size:8.9px;line-height:9.941px;color:#111827;font-weight:400;transform:scaleX(0.9000);transform-origin:0 0;">มาเลเซีย</div>
<svg class="abs" style="left:649.81px;top:635.81px;width:9.33px;height:9.33px;color:#6b7280" viewBox="0 0 24 24" stroke-width="2"><path d="M16 20V4a2 2 0 0 0-2-2h-4a2 2 0 0 0-2 2v16"/><rect width="20" height="14" x="2" y="6" rx="2"/></svg>
<div class="abs t" style="left:664.2px;top:637px;font-size:8.9px;line-height:9.941px;color:#4b5563;font-weight:400;transform:scaleX(0.8710);transform-origin:0 0;">นักบัญชี</div>
<div class="abs t" style="left:804.2px;top:622px;font-size:8.9px;line-height:9.941px;color:#111827;font-weight:400;transform:scaleX(0.9659);transform-origin:0 0;">Check-in date</div>
<svg class="abs" style="left:804.11px;top:636.00px;width:9.48px;height:9.48px;color:#6b7280" viewBox="0 0 24 24" stroke-width="2"><path d="M8 2v4"/><path d="M16 2v4"/><rect width="18" height="18" x="3" y="4" rx="2"/><path d="M3 10h18"/></svg>
<div class="abs t" style="left:818.1px;top:637px;font-size:8.9px;line-height:9.941px;color:#5b6472;font-weight:400;transform:scaleX(0.9196);transform-origin:0 0;">Jan 18, 2026</div>
<svg class="abs" style="left:937.41px;top:628.49px;width:10.71px;height:10.71px;color:#2563eb" viewBox="0 0 24 24" stroke-width="2"><path d="M12 3H5a2 2 0 0 0-2 2v14a2 2 0 0 0 2 2h14a2 2 0 0 0 2-2v-7"/><path d="M18.375 2.625a1 1 0 0 1 3 3l-9.013 9.014a2 2 0 0 1-.853.505l-2.873.84a.5.5 0 0 1-.62-.62l.84-2.873a2 2 0 0 1 .506-.852z"/></svg>
<svg class="abs" style="left:961.93px;top:628.91px;width:9.24px;height:9.24px;color:#dc2626" viewBox="0 0 24 24" stroke-width="2"><path d="M3 6h18"/><path d="M19 6v14c0 1-1 2-2 2H7c-1 0-2-1-2-2V6"/><path d="M8 6V4c0-1 1-2 2-2h4c1 0 2 1 2 2v2"/><path d="M10 11v6"/><path d="M14 11v6"/></svg>
<div class="abs" style="left:190px;top:702px;width:800px;height:1px;background:#e5e7eb;"></div>
</div></body></html>
